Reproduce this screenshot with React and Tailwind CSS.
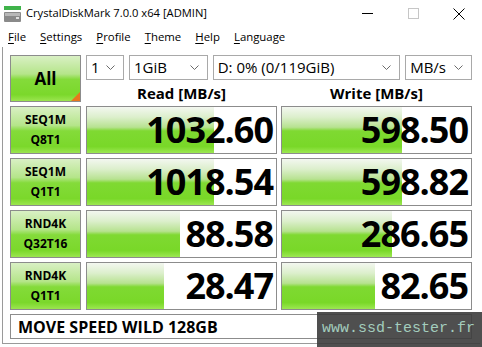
// CrystalDiskMark 7 main window — static replica of a finished run.

const ui = { fontFamily: '"Open Sans", "Noto Sans", sans-serif' }

const rows = [
  { a: 'SEQ1M', b: 'Q8T1', read: '1032.60', rFill: 127, write: '598.50', wFill: 120 },
  { a: 'SEQ1M', b: 'Q1T1', read: '1018.54', rFill: 127, write: '598.82', wFill: 120 },
  { a: 'RND4K', b: 'Q32T16', read: '88.58', rFill: 93, write: '286.65', wFill: 110 },
  { a: 'RND4K', b: 'Q1T1', read: '28.47', rFill: 77, write: '82.65', wFill: 93 },
]

const barGrad =
  'bg-[linear-gradient(to_bottom,#f3f7f0_0%,#dcefcc_22%,#b7e290_44%,#7fd932_52%,#79d828_86%,#9ce852_100%)]'
const labelGrad =
  'bg-[linear-gradient(to_bottom,#d9f0c4_0%,#b5e58a_40%,#84db3a_52%,#7bd82b_86%,#9be54f_100%)]'

function Chevron() {
  return (
    <svg width="9" height="5" viewBox="0 0 9 5" className="shrink-0">
      <polyline points="0.5,0.5 4.5,4.5 8.5,0.5" fill="none" stroke="#6b6b6b" strokeWidth="1" />
    </svg>
  )
}

function Select({ w, label }) {
  return (
    <div className={`${w} h-[25px] border border-[#a9a9a9] bg-white flex items-center justify-between pl-[4px] pr-[8px]`}>
      <span className="text-[15px] text-black leading-none">{label}</span>
      <Chevron />
    </div>
  )
}

function ValueBox({ value, fill }) {
  return (
    <div className="relative w-[191px] h-[48px] border border-[#8c8c8c] bg-white flex items-center justify-end pr-[3px] overflow-hidden">
      <div className={`absolute left-0 top-0 bottom-0 ${barGrad}`} style={{ width: fill }} />
      <span className="relative text-[36px] font-bold tracking-[-1px] text-black leading-none">{value}</span>
    </div>
  )
}

function TitleBar() {
  return (
    <div className="h-[27px] flex items-center">
      <svg width="17" height="16" viewBox="0 0 17 16" className="ml-[4px]">
        <rect x="0" y="0" width="17" height="4" fill="#3fb34a" />
        <rect x="0" y="6" width="17" height="10" rx="1" fill="#8a8a8a" />
        <rect x="1" y="7" width="15" height="3" fill="#b8b8b8" />
        <rect x="12" y="11" width="3" height="2" fill="#e0e0e0" />
      </svg>
      <span className="ml-[5px] text-[11.2px] text-black">CrystalDiskMark 7.0.0 x64 [ADMIN]</span>
      <div className="ml-auto flex items-center">
        <div className="w-[46px] h-[27px] flex items-center justify-center">
          <div className="w-[11px] h-px bg-black" />
        </div>
        <div className="w-[46px] h-[27px] flex items-center justify-center">
          <div className="w-[11px] h-[11px] border border-[#c6c6c6]" />
        </div>
        <div className="w-[46px] h-[27px] flex items-center justify-center">
          <svg width="12" height="12" viewBox="0 0 12 12">
            <path d="M0.5 0.5 L11.5 11.5 M11.5 0.5 L0.5 11.5" stroke="#000" strokeWidth="1" />
          </svg>
        </div>
      </div>
    </div>
  )
}

function MenuBar() {
  const items = [
    ['F', 'ile'],
    ['S', 'ettings'],
    ['P', 'rofile'],
    ['T', 'heme'],
    ['H', 'elp'],
    ['L', 'anguage'],
  ]
  return (
    <div className="h-[20px] flex items-center pl-[8px] gap-[14px] text-[11.4px] text-black">
      {items.map(([k, rest]) => (
        <span key={k}>
          <span className="underline underline-offset-2">{k}</span>
          {rest}
        </span>
      ))}
    </div>
  )
}

export default function App() {
  return (
    <div className="w-[482px] h-[347px] bg-white relative overflow-hidden" style={ui}>
      <TitleBar />
      <MenuBar />
      <div className="ml-[2px] w-[478px] h-[297px] border-l border-b border-[#9a9a9a] pl-[7px] pt-[8px] flex flex-col">
        <div className="flex h-[47px]">
          <div className={`relative w-[71px] h-[47px] border border-[#8c8c8c] ${labelGrad} flex items-center justify-center`}>
            <span className="text-[17px] font-bold text-black">All</span>
            <div className="absolute right-0 bottom-0 w-0 h-0 border-l-[9px] border-l-transparent border-b-[9px] border-b-[#e8761e]" />
          </div>
          <div className="ml-[5px] w-[386px] flex flex-col">
            <div className="flex gap-[5px]">
              <Select w="w-[38px]" label="1" />
              <Select w="w-[79px]" label="1GiB" />
              <Select w="w-[188px]" label="D: 0% (0/119GiB)" />
              <Select w="w-[67px]" label="MB/s" />
            </div>
            <div className="flex gap-[4px] flex-1 items-center pt-[2px]">
              <div className="w-[191px] text-center text-[15px] font-bold text-black">Read [MB/s]</div>
              <div className="w-[191px] text-center text-[15px] font-bold text-black">Write [MB/s]</div>
            </div>
          </div>
        </div>
        <div className="mt-[4px] flex flex-col gap-[4px]">
          {rows.map((r) => (
            <div key={r.a + r.b} className="flex h-[48px]">
              <div className={`w-[71px] h-[48px] border border-[#8c8c8c] ${labelGrad} flex flex-col items-center justify-center text-[12px] font-bold text-black leading-[20px]`}>
                <span>{r.a}</span>
                <span>{r.b}</span>
              </div>
              <div className="ml-[5px] flex gap-[4px]">
                <ValueBox value={r.read} fill={r.rFill} />
                <ValueBox value={r.write} fill={r.wFill} />
              </div>
            </div>
          ))}
          <div className="w-[462px] h-[25px] border border-[#8c8c8c] bg-white flex items-center pl-[7px]">
            <span className="text-[16px] font-bold text-black">MOVE SPEED WILD 128GB</span>
          </div>
        </div>
      </div>
      <div className="absolute left-[317px] top-[312px] w-[165px] h-[35px] bg-[#3c3c3c]/90 flex items-center pl-[5px]">
        <span className="text-[15px] text-[#a3cdbd]" style={{ fontFamily: '"Liberation Mono", monospace' }}>
          www.ssd-tester.fr
        </span>
      </div>
    </div>
  )
}
